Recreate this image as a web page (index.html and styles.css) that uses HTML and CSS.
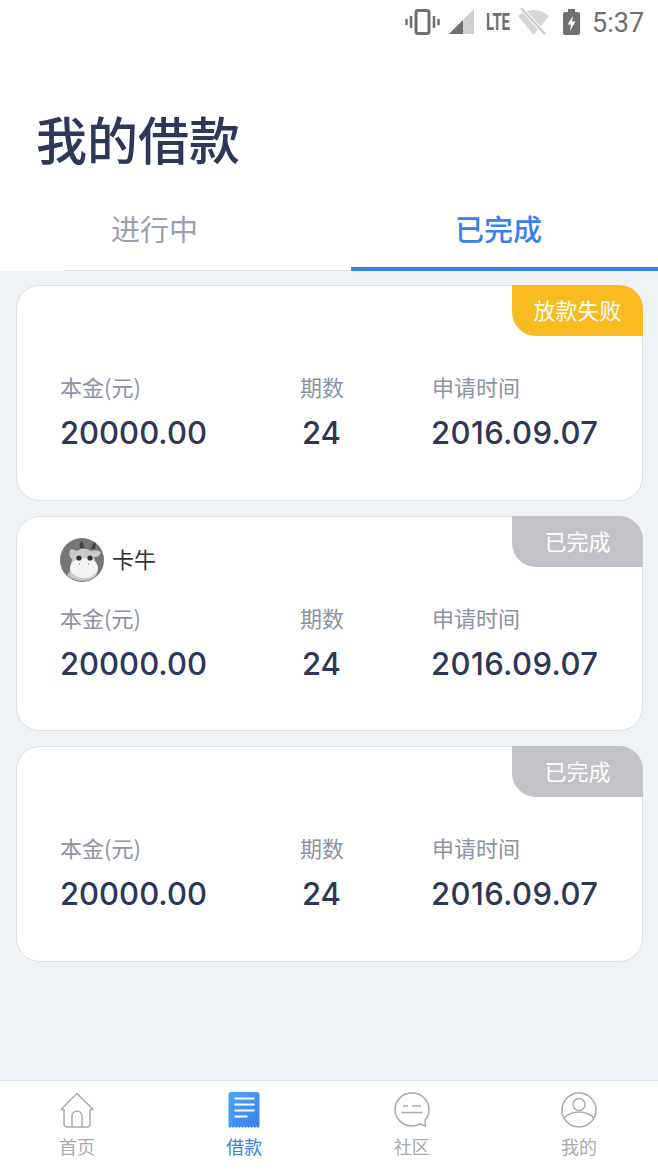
FILE: index.html
```html
<!DOCTYPE html>
<html>
    <head>
        <title>我的借款</title>
        <link rel="stylesheet" href="styles.css">
    </head>
    <body>
        <div class="status-bar">
            <svg class="icon-vibrate" width="35" height="26" viewBox="0 0 35 26"><g fill="none" stroke="#6f6f6f"><rect x="11" y="1.500" width="13" height="23" rx="2" stroke-width="3"/><path d="M6 7v12M1.500 10v6M29 7v12M33.500 10v6" stroke-width="2.500"/></g></svg>
            <svg class="icon-signal" width="25" height="25" viewBox="0 0 25 25"><path d="M0 25 25 0v25z" fill="#d0d0d0"/><path d="M0 25 14 11v14z" fill="#6f6f6f"/></svg>
            <span class="lte">LTE</span>
            <svg class="icon-wifi" width="31" height="27" viewBox="0 0 31 27"><path d="M0 8a23 23 0 0 1 31 0L15.500 27z" fill="#d6d6d6"/><path d="M3 0l24 26" stroke="#fff" stroke-width="4"/><path d="M3 0l24 26" stroke="#c8c8c8" stroke-width="2"/></svg>
            <svg class="icon-battery" width="17" height="26" viewBox="0 0 17 26"><path d="M5 0h7v3h3a2 2 0 0 1 2 2v19a2 2 0 0 1-2 2H2a2 2 0 0 1-2-2V5a2 2 0 0 1 2-2h3z" fill="#6f6f6f"/><path d="M10 7 4.500 15.500H8L7 22l5.500-9.500H9z" fill="#fff"/></svg>
            <span class="clock">5:37</span>
        </div>
        <h1 class="page-title">我的借款</h1>
        <div class="tabs">
            <div class="tab">进行中</div>
            <div class="tab tab-active">已完成</div>
        </div>
        <div class="list">
            <div class="card">
                <div class="badge badge-fail">放款失败</div>
                <div class="lender"></div>
                <div class="fields">
                    <div class="field-amount"><div class="label">本金(元)</div><div class="value">20000.00</div></div>
                    <div class="field-term"><div class="label">期数</div><div class="value">24</div></div>
                    <div class="field-date"><div class="label">申请时间</div><div class="value">2016.09.07</div></div>
                </div>
            </div>
            <div class="card">
                <div class="badge">已完成</div>
                <div class="lender">
                    <svg class="avatar" width="46" height="46" viewBox="0 0 46 46">
                        <circle cx="23" cy="23" r="22" fill="#757575"/>
                        <path d="M8 38c4 4 9 6 15 6s11-2 15-6l-3-4H11z" fill="#bdbdbd"/>
                        <path d="M21 11c-1-3 0-6 2-7 1 3 2 5 2 7zM36 12c1-3 1-5 0-7-2 2-3 4-4 7z" fill="#3f3f3f"/>
                        <path d="M11 13c3-1 5 0 7 1 4-3 10-3 14 0 3-1 6-1 10 1-1 3-3 5-7 5l4 12c0 7-8 11-16 11S11 40 11 33l2-11c-3-2-3-6-2-9z" fill="#c9c9c9"/>
                        <ellipse cx="25" cy="31" rx="14" ry="10" fill="#f4f4f4"/>
                        <circle cx="20" cy="21" r="2.600" fill="#333"/>
                        <circle cx="31" cy="21" r="2.600" fill="#333"/>
                        <path d="M20 27h1M29 27h1" stroke="#999" stroke-width="1.500"/>
                    </svg>
                    <span class="lender-name">卡牛</span>
                </div>
                <div class="fields">
                    <div class="field-amount"><div class="label">本金(元)</div><div class="value">20000.00</div></div>
                    <div class="field-term"><div class="label">期数</div><div class="value">24</div></div>
                    <div class="field-date"><div class="label">申请时间</div><div class="value">2016.09.07</div></div>
                </div>
            </div>
            <div class="card">
                <div class="badge">已完成</div>
                <div class="lender"></div>
                <div class="fields">
                    <div class="field-amount"><div class="label">本金(元)</div><div class="value">20000.00</div></div>
                    <div class="field-term"><div class="label">期数</div><div class="value">24</div></div>
                    <div class="field-date"><div class="label">申请时间</div><div class="value">2016.09.07</div></div>
                </div>
            </div>
        </div>
        <div class="nav">
            <div class="nav-item">
                <svg width="36" height="36" viewBox="0 0 36 36"><path d="M2 17.500 18 1.500l16 16h-3V32a3 3 0 0 1-3 3H8a3 3 0 0 1-3-3V17.500zM13 35V24a5 5 0 0 1 10 0v11" fill="none" stroke="#aaa" stroke-width="1.500" stroke-linejoin="round"/></svg>
                <span>首页</span>
            </div>
            <div class="nav-item nav-active">
                <svg width="36" height="36" viewBox="0 0 36 36">
                    <defs><linearGradient id="bill" x1="0" y1="0" x2="1" y2="1"><stop offset="0" stop-color="#4ba6f6"/><stop offset="1" stop-color="#3a7ff0"/></linearGradient></defs>
                    <path d="M5 0h26a2.500 2.500 0 0 1 2.500 2.500V34.500l-1.550 1.500-1.550-1.500-1.550 1.500-1.550-1.500-1.550 1.500-1.550-1.500-1.550 1.500-1.550-1.500-1.550 1.500-1.550-1.500-1.550 1.500-1.550-1.500-1.550 1.500-1.550-1.500-1.550 1.500-1.550-1.500-1.550 1.500-1.550-1.500-1.550 1.500-1.550-1.500V2.500A2.500 2.500 0 0 1 5 0z" fill="url(#bill)"/>
                    <path d="M8.500 6.500h20M8.500 12.500h20M8.500 18.500h20M8.500 24.500h13" stroke="#fff" stroke-width="1.800"/>
                </svg>
                <span>借款</span>
            </div>
            <div class="nav-item">
                <svg width="36" height="36" viewBox="0 0 36 36"><path d="M18 1c9.500 0 17 7.500 17 16.500 0 4-1.500 8-4 10.500l.5 6-5.500-2c-2.500 1.300-5 2-8 2C8.500 34 1 26.500 1 17.500S8.500 1 18 1z" fill="none" stroke="#aaa" stroke-width="1.500" stroke-linejoin="round"/><path d="M9 14h5M18 14h9M7.500 20.500h21" stroke="#aaa" stroke-width="1.500"/></svg>
                <span>社区</span>
            </div>
            <div class="nav-item">
                <svg width="36" height="36" viewBox="0 0 36 36"><g fill="none" stroke="#aaa" stroke-width="1.500"><circle cx="18" cy="18" r="17"/><circle cx="18" cy="12.500" r="6"/><path d="M3 26c4-4 9-6 15-6s11 2 15 6"/></g></svg>
                <span>我的</span>
            </div>
        </div>
    </body>
</html>
```

FILE: styles.css
```css
* {
    box-sizing: border-box;
}
body {
    margin: 0;
    height: 1170px;
    overflow: hidden;
    display: flex;
    flex-direction: column;
    background-color: #eff3f6;
    font-family: "Noto Sans CJK SC", "Liberation Sans", sans-serif;
}
.status-bar {
    height: 48px;
    padding: 0 0 5px 405px;
    background-color: white;
    display: flex;
    align-items: center;
}
.icon-signal {
    margin-left: 9px;
}
.lte {
    width: 24px;
    margin-left: 12px;
    font-family: "Roboto", sans-serif;
    font-size: 24px;
    font-weight: 700;
    color: #6f6f6f;
    transform: scaleX(0.62);
    transform-origin: left;
}
.icon-wifi {
    margin-left: 8px;
}
.icon-battery {
    margin-left: 14px;
}
.clock {
    margin: 3px 0 0 12px;
    font-family: "Roboto", sans-serif;
    font-size: 27px;
    color: #6f6f6f;
}
.page-title {
    margin: 0;
    height: 136px;
    padding: 57px 0 0 36px;
    background-color: white;
    font-size: 51px;
    line-height: 66px;
    font-weight: 500;
    color: #2d3757;
}
.tabs {
    height: 87px;
    background-color: white;
    display: flex;
    padding-left: 64px;
}
.tab {
    flex: 0 0 287px;
    padding-right: 106px;
    text-align: center;
    font-size: 29px;
    line-height: 88px;
    color: #9a9fb2;
    border-bottom: 1px solid #dfe3ea;
}
.tab-active {
    flex: 1;
    padding-right: 12px;
    color: #3a7ff0;
    font-weight: 500;
    border-bottom: 4px solid #3a7ff0;
}
.list {
    flex: 1;
    padding: 14px 15px 0 16px;
    display: flex;
    flex-direction: column;
    gap: 15px;
}
.card {
    height: 215.500px;
    position: relative;
    background-color: white;
    border: 1px solid #dde0e6;
    border-radius: 24px;
    padding: 20px 0 0 43px;
}
.badge {
    position: absolute;
    top: -1px;
    right: -1px;
    width: 131px;
    height: 51px;
    background-color: #c2c2c8;
    border-radius: 0 24px 0 24px;
    color: white;
    font-size: 22px;
    line-height: 49px;
    text-align: center;
}
.badge-fail {
    background-color: #f9bb1f;
}
.lender {
    height: 46px;
    display: flex;
    align-items: center;
    gap: 7px;
}
.avatar {
    margin-left: -1px;
}
.lender-name {
    margin-bottom: 3px;
    font-size: 22px;
    color: #333;
}
.fields {
    margin-top: 19px;
    display: flex;
}
.field-amount {
    width: 240px;
}
.field-term {
    width: 132px;
}
.label {
    font-size: 22px;
    line-height: 30px;
    color: #8d92a3;
}
.value {
    margin-top: 9px;
    font-family: "Inter", sans-serif;
    font-size: 31px;
    line-height: 46px;
    font-weight: 500;
    color: #2d3757;
}
.field-term .value {
    margin-left: 2px;
}
.field-date .value {
    margin-left: -1px;
    letter-spacing: 0.400px;
}
.nav {
    height: 90px;
    background-color: white;
    border-top: 1px solid #dde0e6;
    display: flex;
    justify-content: space-between;
    padding: 11px 59px 0 57px;
}
.nav-item {
    width: 40px;
    display: flex;
    flex-direction: column;
    align-items: center;
    font-size: 18px;
    line-height: 24px;
    color: #aaa;
}
.nav-item span {
    margin-top: 6px;
}
.nav-active {
    color: #3a7ff0;
}
```
